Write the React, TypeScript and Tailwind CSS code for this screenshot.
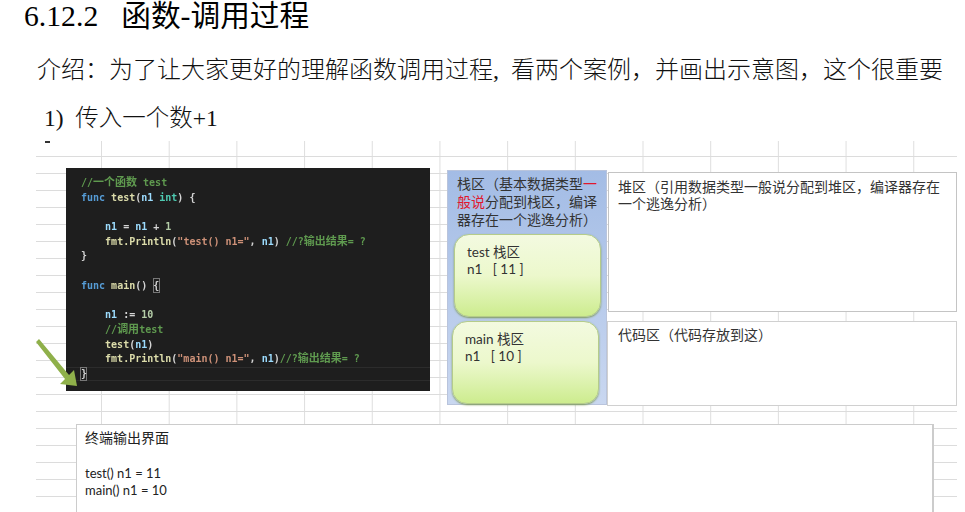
const func = 'text-[#569cd6]';
const name = 'text-[#dcdcaa]';
const plain = 'text-[#d4d4d4]';
const param = 'text-[#9cdcfe]';
const type = 'text-[#4ec9b0]';
const str = 'text-[#ce9178]';
const comment = 'text-[#5f9a4f]';
const commentCn = 'text-[#5f9a4f] text-[11px]';
const num = 'text-[#b5cea8]';

type Token = [string, string];

const codeLines: Token[][] = [
  [[comment, '//'], [commentCn, '一个函数'], [comment, ' test']],
  [[func, 'func '], [name, 'test'], [plain, '('], [param, 'n1 '], [type, 'int'], [plain, ') {']],
  [],
  [[param, '    n1'], [plain, ' = '], [param, 'n1'], [plain, ' + '], [num, '1']],
  [[param, '    '], [name, 'fmt.Println'], [plain, '('], [str, '"test() n1="'], [plain, ', '], [param, 'n1'], [plain, ') '], [comment, '//?'], [commentCn, '输出结果'], [comment, '= ?']],
  [[plain, '}']],
  [],
  [[func, 'func '], [name, 'main'], [plain, '() '], [plain, '{']],
  [],
  [[param, '    n1'], [plain, ' := '], [num, '10']],
  [[comment, '    //'], [commentCn, '调用'], [comment, 'test']],
  [[name, '    test'], [plain, '('], [param, 'n1'], [plain, ')']],
  [[name, '    fmt.Println'], [plain, '('], [str, '"main() n1="'], [plain, ', '], [param, 'n1'], [plain, ')'], [comment, '//?'], [commentCn, '输出结果'], [comment, '= ?']],
  [[plain, '}']],
];

function CodePanel() {
  return (
    <div className="relative mt-[27px] h-[223px] w-[364px] shrink-0 bg-[#1e1e1e] pl-[15px] pt-[8px] font-['DejaVu_Sans_Mono','Noto_Sans_CJK_SC',monospace] text-[10px] font-bold leading-[14.7px]">
      {/* current line highlight + bracket match */}
      <div className="absolute bottom-[10px] left-0 right-0 h-[14px] border-y border-[#2c2c2c]" />
      <div className="absolute left-[87px] top-[110px] h-[15px] w-[7px] border border-[#777]" />
      <div className="absolute left-[14px] top-[199px] h-[14px] w-[7px] border border-[#777]" />
      <div className="relative blur-[0.3px]">
        {codeLines.map((line, i) => (
          <div key={i} className="h-[14.7px] whitespace-pre">
            {line.map(([color, text], j) => (
              <span key={j} className={color}>{text}</span>
            ))}
          </div>
        ))}
      </div>
    </div>
  );
}

function StackFrame({ title, value, className }: { title: string; value: string; className: string }) {
  return (
    <div className={`h-[83px] w-[147px] rounded-[15px] border border-[#b5cc8a] bg-gradient-to-b from-[#f3fae0] via-[#ecf8cc] to-[#cdec8e] pl-[12px] pt-[9px] font-['Lato','Noto_Sans_CJK_SC',sans-serif] text-[13.5px] font-normal leading-[17px] text-[#333] shadow-[0_1px_2px_#7f9a5a] ${className}`}>
      <div>{title}</div>
      <div className="whitespace-pre">{value}</div>
    </div>
  );
}

export default function App() {
  return (
    <div className="flex h-[512px] w-[965px] flex-col overflow-hidden bg-white">
      <h1 className="ml-[24px] flex h-[32px] items-center font-['Liberation_Serif','Noto_Sans_CJK_SC',serif] text-[29.7px] font-normal text-black">
        <span>6.12.2</span>
        <span className="ml-[23px]">函数-调用过程</span>
      </h1>
      <p className="ml-[37px] mt-[22px] h-[32px] whitespace-pre font-['Liberation_Serif','Noto_Sans_CJK_SC',serif] text-[24px] font-light leading-[32px] text-[#111]">
        介绍：为了让大家更好的理解函数调用过程,  看两个案例，并画出示意图，这个很重要
      </p>
      <p className="ml-[44px] mt-[16px] h-[32px] whitespace-pre font-['Liberation_Serif','Noto_Sans_CJK_SC',serif] text-[23.5px] font-light leading-[32px] text-[#111]">
        1)  传入一个数+1
      </p>

      {/* spreadsheet screenshot */}
      <div className="relative ml-[36px] mt-[7px] w-[921px] flex-1 bg-[linear-gradient(#dcdcdc_1px,transparent_1px),linear-gradient(90deg,#dedede_1px,transparent_1px)] bg-[size:67.7px_17px] bg-[position:65px_15px] font-['Noto_Sans_CJK_SC',sans-serif] font-normal">
        <div className="absolute left-[9px] top-0 h-[2px] w-[5px] bg-[#333]" />

        <div className="flex h-[265px] items-start pl-[30px]">
          <CodePanel />

          <div className="ml-[17px] mt-[29px] h-[235px] w-[160px] shrink-0 border border-[#b9c4dc] bg-gradient-to-b from-[#a3bce5] to-[#c9d7f0] pl-[9px] pt-[3px]">
            <p className="w-[148px] text-[14px] leading-[18px] text-[#333]">
              栈区（基本数据类型<span className="text-[#e0182d]">一般说</span>分配到栈区，编译器存在一个逃逸分析）
            </p>
            <StackFrame title="test 栈区" value="n1   [ 11 ]" className="ml-[-3px] mt-[6px]" />
            <StackFrame title="main 栈区" value="n1   [ 10 ]" className="ml-[-5px] mt-[4px] h-[82px]" />
          </div>

          <div className="ml-[1px] mt-[31px] flex w-[349px] shrink-0 flex-col gap-[9px] text-[14px] leading-[17px] text-[#333]">
            <div className="h-[140px] border border-[#c4c4c4] bg-white pl-[9px] pr-[12px] pt-[5px]">
              堆区（引用数据类型一般说分配到堆区，编译器存在一个逃逸分析）
            </div>
            <div className="ml-[-1px] h-[85px] border border-[#d0d0d0] bg-white pl-[10px] pt-[4px]">
              代码区（代码存放到这）
            </div>
          </div>
        </div>

        <div className="ml-[40px] mt-[18px] h-[100px] w-[858px] border border-r-2 border-[#cccccc] bg-white pl-[8px] pt-[2px] text-[#222]">
          <div className="text-[14px] leading-[20px]">终端输出界面</div>
          <div className="mt-[18px] font-['Lato','Noto_Sans_CJK_SC',sans-serif] text-[13px] leading-[17px]">
            <div>test() n1 = 11</div>
            <div>main() n1 = 10</div>
          </div>
        </div>

        {/* green arrow over the code */}
        <svg className="absolute left-0 top-[198px] h-[50px] w-[42px]" viewBox="0 0 42 50">
          <path d="M0 3 L3 0 L33 36 L38 31 L41 47 L24 45 L29 40 Z" fill="#8fb04a" />
        </svg>
      </div>
    </div>
  );
}
